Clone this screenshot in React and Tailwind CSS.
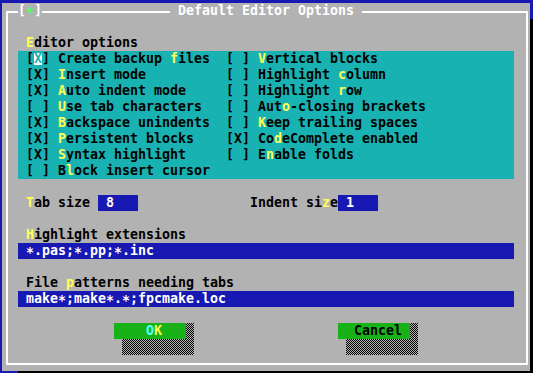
import React from "react";

// Turbo Vision style dialog: 8x16 character cells
// hotkeys are marked with ~x~ like in the original resource strings

function Label({ text }) {
  const parts = text.split("~");
  return parts.map((p, i) =>
    i % 2 ? (
      <span key={i} className="text-[#ffff54]">{p}</span>
    ) : (
      <span key={i}>{p}</span>
    )
  );
}

// VGA font draws '*' centred on the cell, the ttf one sits high
function Field({ value }) {
  return value.split("").map((ch, i) =>
    ch === "*" ? (
      <span key={i} className="relative top-[2px]">*</span>
    ) : (
      <span key={i}>{ch}</span>
    )
  );
}

function Check({ checked, text, cursor }) {
  return (
    <div className="h-4 flex whitespace-pre">
      <span>[</span>
      {cursor ? (
        <span className="w-[8px] h-[12px] self-center bg-white text-[#18b2b2] leading-[12px]">X</span>
      ) : (
        <span>{checked ? "X" : " "}</span>
      )}
      <span>] </span>
      <Label text={text} />
    </div>
  );
}

const leftOpts = [
  { checked: true, text: "Create backup ~f~iles", cursor: true },
  { checked: true, text: "~I~nsert mode" },
  { checked: true, text: "~A~uto indent mode" },
  { checked: false, text: "~U~se tab characters" },
  { checked: true, text: "~B~ackspace unindents" },
  { checked: true, text: "~P~ersistent blocks" },
  { checked: true, text: "~S~yntax highlight" },
  { checked: false, text: "B~l~ock insert cursor" },
];

const rightOpts = [
  { checked: false, text: "~V~ertical blocks" },
  { checked: false, text: "Highlight ~c~olumn" },
  { checked: false, text: "Highlight ~r~ow" },
  { checked: false, text: "Aut~o~-closing brackets" },
  { checked: false, text: "~K~eep trailing spaces" },
  { checked: true, text: "Co~d~eComplete enabled" },
  { checked: false, text: "E~n~able folds" },
];

const checker =
  "bg-[image:repeating-conic-gradient(#000_0_25%,#b2b2b2_0_50%)] bg-size-[2px_2px]";

function Button({ children, pad }) {
  return (
    <div className="flex flex-col w-[80px]">
      <div className="h-4 flex">
        <div className={`w-[72px] bg-[#18b218] whitespace-pre ${pad}`}>{children}</div>
        <div className={`w-[8px] ${checker}`} />
      </div>
      <div className="h-4 flex">
        <div className="w-[8px]" />
        <div className={`w-[72px] ${checker}`} />
      </div>
    </div>
  );
}

export default function App() {
  return (
    <div className="w-[533px] h-[373px] bg-[#1818b2] pl-[2px] pt-[3px] overflow-hidden font-['DejaVu_Sans_Mono',monospace] font-bold text-[13.29px] leading-4 text-black">
      <div className="relative w-[528px] h-[368px] bg-[#b2b2b2] shadow-[16px_16px_0_0_#000]">
        {/* window frame */}
        <div className="absolute left-[4px] top-[8px] w-[522px] h-[354px] border-2 border-white" />

        <div className="relative flex flex-col">
          {/* title row */}
          <div className="h-4 flex whitespace-pre text-white">
            <div className="w-[16px]" />
            <span className="bg-[#b2b2b2]">
              [<span className="relative top-[2px] text-[#54ff54]">*</span>]
            </span>
            <span className="ml-[128px] bg-[#b2b2b2]"> Default Editor Options </span>
          </div>
          <div className="h-4" />

          <div className="h-4 pl-[24px] whitespace-pre">
            <Label text="~E~ditor options" />
          </div>

          {/* checkbox cluster */}
          <div className="ml-[16px] w-[496px] h-[128px] bg-[#18b2b2] pl-[8px] flex">
            <div className="w-[200px] flex flex-col">
              {leftOpts.map((o, i) => (
                <Check key={i} {...o} />
              ))}
            </div>
            <div className="flex flex-col">
              {rightOpts.map((o, i) => (
                <Check key={i} {...o} />
              ))}
            </div>
          </div>
          <div className="h-4" />

          {/* size inputs */}
          <div className="h-4 flex pl-[24px] whitespace-pre">
            <Label text="~T~ab size " />
            <span className="w-[40px] bg-[#1818b2] text-white"> 8</span>
            <span className="ml-[112px]">
              <Label text="Indent si~z~e" />
            </span>
            <span className="w-[40px] bg-[#1818b2] text-white"> 1</span>
          </div>
          <div className="h-4" />

          <div className="h-4 pl-[24px] whitespace-pre">
            <Label text="~H~ighlight extensions" />
          </div>
          <div className="h-4 ml-[16px] w-[496px] bg-[#1818b2] text-white pl-[8px] whitespace-pre">
            <Field value="*.pas;*.pp;*.inc" />
          </div>
          <div className="h-4" />

          <div className="h-4 pl-[24px] whitespace-pre">
            <Label text="File ~p~atterns needing tabs" />
          </div>
          <div className="h-4 ml-[16px] w-[496px] bg-[#1818b2] text-white pl-[8px] whitespace-pre">
            <Field value="make*;make*.*;fpcmake.loc" />
          </div>
          <div className="h-4" />

          {/* buttons */}
          <div className="flex">
            <div className="ml-[112px]">
              <Button pad="pl-[32px]">
                <span className="text-[#54ffff]">O</span>
                <span className="text-[#ffff54]">K</span>
              </Button>
            </div>
            <div className="ml-[144px]">
              <Button pad="pl-[16px]">Cancel</Button>
            </div>
          </div>
        </div>
      </div>
    </div>
  );
}
